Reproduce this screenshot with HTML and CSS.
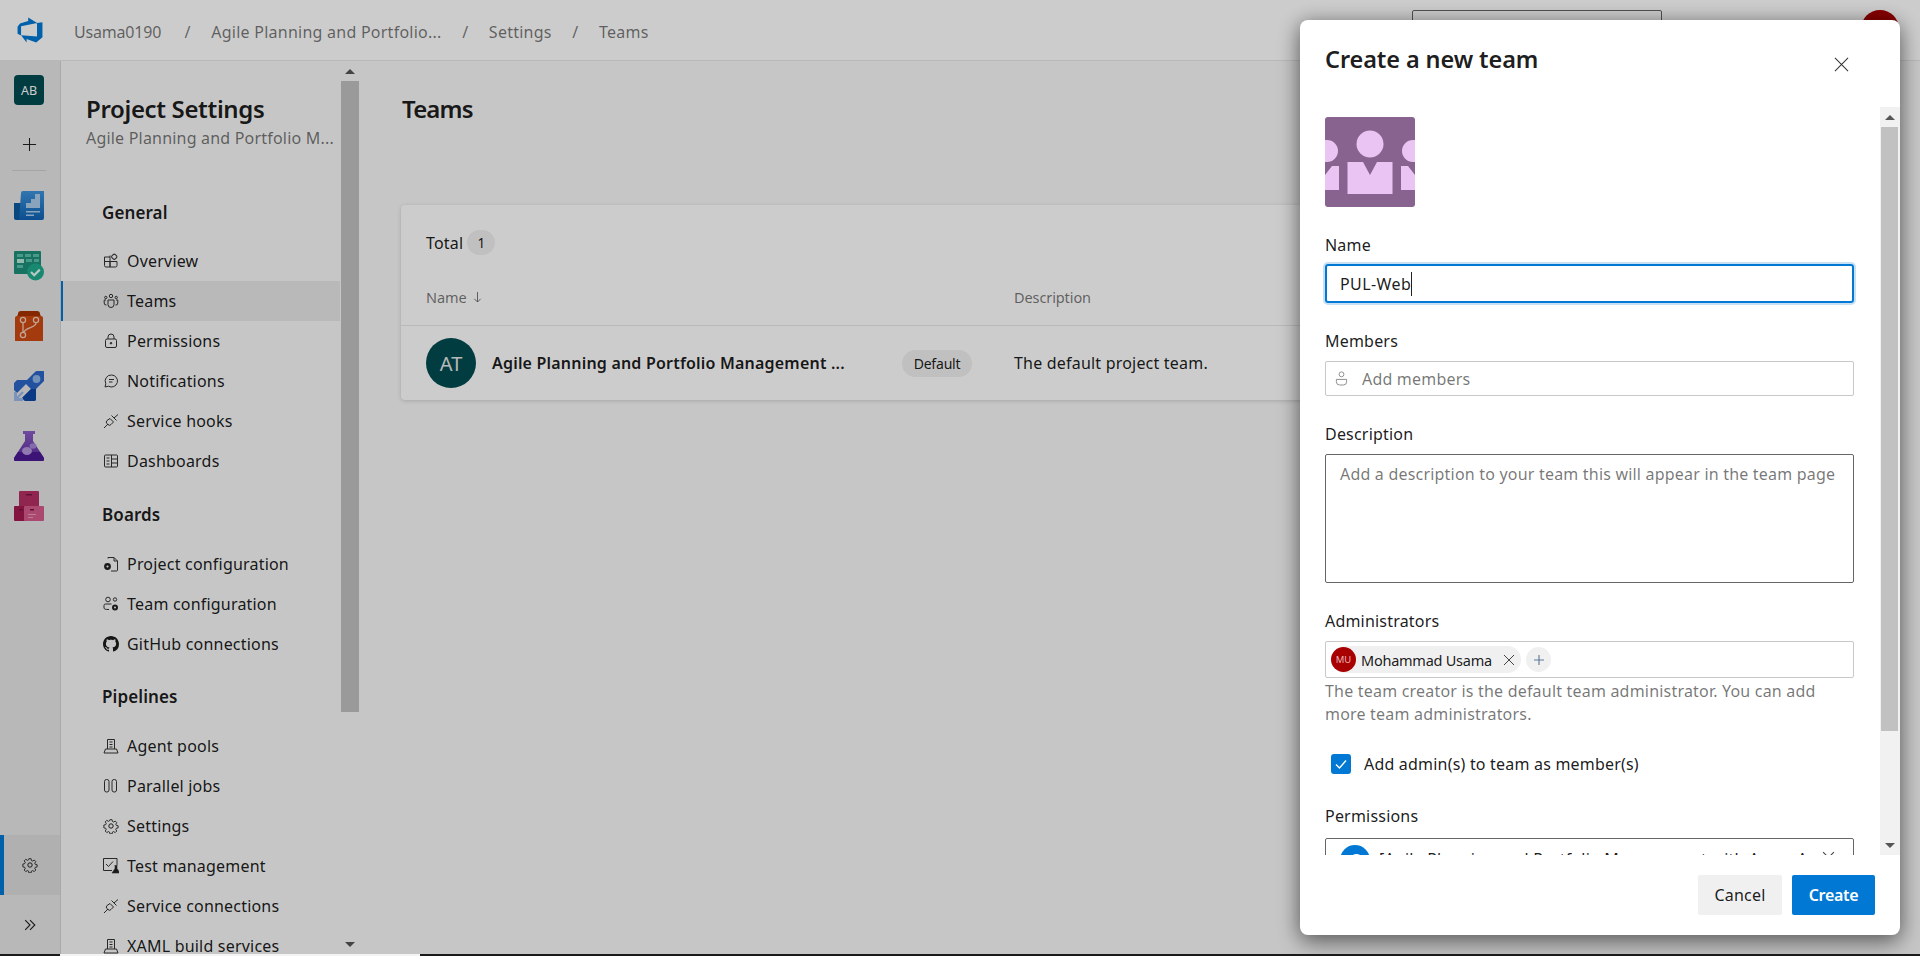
FILE: index.html
```html
<!DOCTYPE html>
<html lang="en">
<head>
<meta charset="utf-8">
<title>Teams - Project Settings</title>
<link rel="stylesheet" href="styles.css">
</head>
<body>
<div class="app">
  <header class="topbar">
    <svg class="logo" viewBox="0 0 18 18"><path fill="#0078d4" d="M17 4v9.74l-4 3.28-6.2-2.26V17L3.29 12.41l10.23.8V4.44L17 4zm-3.41.49L7.85 1v2.29L2.58 4.84 1 6.87v4.61l2.26 1V6.57z"/></svg>
    <nav class="crumbs">
      <span class="crumb first">Usama0190</span><span class="sep">/</span>
      <span class="crumb">Agile Planning and Portfolio...</span><span class="sep">/</span>
      <span class="crumb">Settings</span><span class="sep">/</span>
      <span class="crumb">Teams</span>
    </nav>
    <div class="search"></div>
    <div class="me"></div>
  </header>
  <div class="workspace">
    <aside class="rail">
      <div class="tile">AB</div>
      <svg class="plus" viewBox="0 0 16 16"><path d="M8 1v14M1 8h14" stroke="#222" stroke-width="1.1" fill="none"/></svg>
      <div class="rail-rule"></div>
      <svg class="svc" viewBox="0 0 30 30">
        <defs><linearGradient id="gb" x1="0" y1="0" x2="0" y2="1"><stop offset="0" stop-color="#3f94dc"/><stop offset="1" stop-color="#0f62b4"/></linearGradient></defs>
        <path d="M0 12h7v17H2a2 2 0 0 1-2-2z" fill="#0a5a9e"/><path d="M7 2a2 2 0 0 1 2-2h21v27a2 2 0 0 1-2 2H5z" fill="url(#gb)"/>
        <path d="M12 17v-5h5V8h4V3h5v14z" fill="#a9cdec"/><path d="M12 20h14v1.5H12zM12 23.5h8V25h-8z" fill="#a9cdec"/>
      </svg>
      <svg class="svc" viewBox="0 0 30 30">
        <rect x="0" y="0" width="27" height="23" rx="1" fill="#1f8f7b"/>
        <path d="M3 3h6v3H3zM11 3h6v3h-6zM19 3h6v3h-6z" fill="#5cc0ab"/><path d="M3 8h7v4H3z" fill="#b7eadd"/><path d="M12 8h6v3h-6zM20 8h5v3h-5zM3 14h6v3H3z" fill="#5cc0ab"/>
        <circle cx="21.5" cy="21" r="8.5" fill="#1eab8c"/><path d="M17 21l3.2 3.2 5.6-5.6" stroke="#e9fbf6" stroke-width="2.2" fill="none"/>
      </svg>
      <svg class="svc" viewBox="0 0 30 30">
        <path d="M4 3a3 3 0 0 1 3-3h16a3 3 0 0 1 3 3l2 5H2z" fill="#a73200"/><path d="M1 7a2 2 0 0 1 2-2h24a2 2 0 0 1 2 2v23H1z" fill="#cc4a12"/>
        <g fill="none" stroke="#f3cdb9" stroke-width="1.3"><circle cx="9" cy="9" r="2.6"/><circle cx="22" cy="9" r="2.6"/><circle cx="9" cy="24" r="2.6"/><path d="M9 12v9M22 12c0 5-10 4-12 9"/></g>
      </svg>
      <svg class="svc" viewBox="0 0 30 30">
        <path d="M2 9h10L20 1a3 3 0 0 1 2-1h6a2 2 0 0 1 2 2v6a3 3 0 0 1-1 2l-8 8v10a2 2 0 0 1-2 2h-9l-3-3 9-9-5-5-9 9-5-5-.5-.5a1.500 1.500 0 0 1 0-2z" transform="translate(1 0)" fill="#2b66c8"/>
        <path d="M22 18v10a2 2 0 0 1-2 2h-9l-3-3 9-9z" fill="#0f48a6"/>
        <circle cx="22.500" cy="8" r="3.900" fill="#8fb6e8"/>
        <path d="M0 21h3v6h6v3H0z" fill="#9db8e8"/><path d="M3 27l6-6" stroke="#9db8e8" stroke-width="2.400"/>
      </svg>
      <svg class="svc" viewBox="0 0 30 30">
        <defs><linearGradient id="gf" x1="0" y1="0" x2="0" y2="1"><stop offset="0" stop-color="#8a5fc7"/><stop offset="1" stop-color="#5c2a9d"/></linearGradient></defs>
        <path d="M9 0h12v3h-2v7l11 17a2 2 0 0 1-2 3H2a2 2 0 0 1-2-3l11-17V3H9z" fill="url(#gf)"/><path d="M4 21h22l4 6a2 2 0 0 1-2 3H2a2 2 0 0 1-2-3z" fill="#4a1a94"/>
        <ellipse cx="13" cy="20" rx="5" ry="4" fill="#b596dd"/><ellipse cx="19" cy="15" rx="3.4" ry="2.8" fill="#a688d6"/>
      </svg>
      <svg class="svc" viewBox="0 0 30 30">
        <rect x="5" y="0" width="20" height="16" rx="1" fill="#b42f63"/><rect x="0" y="15" width="15" height="15" rx="1" fill="#a3194f"/><rect x="10" y="15" width="20" height="15" rx="1" fill="#d55b8c"/>
        <path d="M12 3h6v1.5h-6zM5 18h4v1.5H5zM16 18h4v1.5h-4z" fill="#7b1340"/><path d="M14 23h8v1h-8zM14 26h5v1h-5z" fill="#eb9dbc"/>
      </svg>
      <div class="rail-fill"></div>
      <div class="rail-settings"><svg class="gear" viewBox="0 0 16 16"><use href="#i-gear"/></svg></div>
      <div class="rail-expand"><svg class="chev" viewBox="0 0 16 16"><path d="M2.500 2.500L8 8l-5.500 5.500M8 2.500L13.500 8 8 13.500" fill="none" stroke="#222" stroke-width="1.300"/></svg></div>
    </aside>

    <section class="settings">
      <div class="settings-list">
        <h1 class="settings-title">Project Settings</h1>
        <p class="settings-sub">Agile Planning and Portfolio M...</p>

        <h2 class="group first-group">General</h2>
        <a class="item"><svg class="ico" viewBox="0 0 16 16"><path d="M1.500 4h5.500v10H3a1.500 1.500 0 0 1-1.500-1.500zM1.500 8.500H14M7 8.500V14h5.500A1.500 1.500 0 0 0 14 12.500V8.500M7 4V2.500"/><rect x="9" y="1.500" width="4.500" height="4.500" rx="1.500" transform="rotate(45 11.250 3.750)"/></svg>Overview</a>
        <a class="item on"><svg class="ico" viewBox="0 0 16 16"><circle cx="8" cy="3" r="1.700"/><circle cx="2.800" cy="4.500" r="1.200"/><circle cx="13.200" cy="4.500" r="1.200"/><path d="M5 7h6v4.500a3 3 0 0 1-6 0zM3 7H1.200v3a2 2 0 0 0 2.300 2M13 7h1.800v3a2 2 0 0 1-2.300 2"/></svg>Teams</a>
        <a class="item"><svg class="ico" viewBox="0 0 16 16"><rect x="2.500" y="6" width="11" height="8.500" rx="1.500"/><path d="M5 6V4a3 3 0 0 1 6 0v2"/><circle cx="8" cy="10.200" r=".8" fill="#333"/></svg>Permissions</a>
        <a class="item"><svg class="ico" viewBox="0 0 16 16"><path d="M8.500 2a6 6 0 1 1-3 11.200L2 14l.8-3.300A6 6 0 0 1 8.500 2zM6 6.500h5M6 9h3.500"/></svg>Notifications</a>
        <a class="item"><svg class="ico" viewBox="0 0 16 16"><use href="#i-plug"/></svg>Service hooks</a>
        <a class="item"><svg class="ico" viewBox="0 0 16 16"><rect x="1.500" y="2" width="13" height="12" rx="1"/><path d="M8.500 2v12M3.500 5h3M3.500 8h3M3.500 11h3M8.500 6h6M8.500 10h6"/></svg>Dashboards</a>

        <h2 class="group">Boards</h2>
        <a class="item"><svg class="ico" viewBox="0 0 16 16"><path d="M5 2.500V1.500h6l3.500 3.500v9a1 1 0 0 1-1 1H8M11 1.500V5h3.500"/><circle cx="4.500" cy="10.500" r="3.400" fill="#222" stroke="none"/><circle cx="4.500" cy="10.500" r="1.100" fill="#f8f8f8" stroke="none"/></svg>Project configuration</a>
        <a class="item"><svg class="ico" viewBox="0 0 16 16"><circle cx="5" cy="3.500" r="2.300"/><circle cx="12" cy="3.500" r="1.700"/><path d="M1 12V9.500A1.500 1.500 0 0 1 2.500 8h6M1 12c0 1 1.500 1.500 4 1.500h1"/><circle cx="12" cy="11.500" r="3" fill="#222" stroke="none"/><circle cx="12" cy="11.500" r="1" fill="#f8f8f8" stroke="none"/></svg>Team configuration</a>
        <a class="item"><svg class="ico gh" viewBox="0 0 16 16"><path fill="#1b1b1b" stroke="none" d="M8 0C3.580 0 0 3.580 0 8c0 3.540 2.290 6.530 5.470 7.590.400.070.550-.170.550-.380 0-.190-.010-.820-.010-1.490-2.010.370-2.530-.490-2.690-.940-.090-.230-.480-.940-.820-1.130-.280-.150-.680-.520-.010-.530.630-.010 1.080.580 1.230.820.720 1.210 1.870.870 2.330.660.070-.520.280-.870.510-1.070-1.780-.200-3.640-.890-3.640-3.950 0-.870.310-1.590.820-2.150-.080-.200-.360-1.020.080-2.120 0 0 .670-.210 2.200.820.640-.180 1.320-.270 2-.270s1.360.090 2 .270c1.530-1.040 2.200-.820 2.200-.820.440 1.100.160 1.920.080 2.120.510.560.820 1.270.820 2.150 0 3.070-1.870 3.750-3.650 3.950.290.250.540.730.540 1.480 0 1.070-.010 1.930-.010 2.200 0 .210.150.460.550.380A8.010 8.010 0 0 0 16 8c0-4.420-3.580-8-8-8z"/></svg>GitHub connections</a>

        <h2 class="group pipe">Pipelines</h2>
        <a class="item"><svg class="ico" viewBox="0 0 16 16"><use href="#i-agent"/></svg>Agent pools</a>
        <a class="item"><svg class="ico" viewBox="0 0 16 16"><rect x="1.500" y="1.500" width="4.500" height="12.500" rx="2"/><rect x="9" y="1.500" width="4.500" height="12.500" rx="2"/></svg>Parallel jobs</a>
        <a class="item"><svg class="ico" viewBox="0 0 16 16"><use href="#i-gear"/></svg>Settings</a>
        <a class="item"><svg class="ico" viewBox="0 0 16 16"><path d="M9 12.500H.500V.500H14V7M3 6l2.500 2.500L10 3.500"/><path d="M11.500 7.500h3M12 7.500v3l-3 4.500h8l-3-4.500v-3" fill="#222" stroke-width=".6"/></svg>Test management</a>
        <a class="item"><svg class="ico" viewBox="0 0 16 16"><use href="#i-plug"/></svg>Service connections</a>
        <a class="item"><svg class="ico" viewBox="0 0 16 16"><use href="#i-agent"/></svg>XAML build services</a>
      </div>
      <div class="sb sb-page">
        <span class="arrow-up"></span>
        <span class="sb-thumb"></span>
        <span class="sb-rest"></span>
        <span class="arrow-down"></span>
      </div>
    </section>

    <main class="main">
      <h1 class="page-title">Teams</h1>
      <section class="card">
        <div class="total">Total<span class="count">1</span></div>
        <div class="thead">
          <div class="th">Name <svg class="sort" viewBox="0 0 10 14"><path d="M5 1v11M1.500 8.500L5 12l3.500-3.500" fill="none" stroke="#666" stroke-width="1"/></svg></div>
          <div class="th">Description</div>
        </div>
        <div class="trow">
          <div class="namecell">
            <span class="team-av">AT</span>
            <span class="team-name">Agile Planning and Portfolio Management ...</span>
            <span class="pill">Default</span>
          </div>
          <div class="desc">The default project team.</div>
        </div>
      </section>
    </main>
  </div>
  <div class="scrim"></div>

  <div class="modal">
    <div class="modal-head">
      <h2 class="modal-title">Create a new team</h2>
      <svg class="close" viewBox="0 0 16 16"><path d="M1 1l14 14M15 1L1 15" stroke="#333" stroke-width="1.100" fill="none"/></svg>
    </div>
    <div class="modal-mid">
      <div class="form">
        <svg class="team-pic" viewBox="0 0 90 90">
          <rect width="90" height="90" rx="3" fill="#886390"/>
          <g fill="#eac4f2">
            <ellipse cx="45" cy="27" rx="13.500" ry="13.500"/>
            <path d="M22.500 45H38l7 13 7-13h15.500v32h-45z"/>
            <path d="M0 23h2a11 11 0 0 1 0 22H0zM90 23h-2a11 11 0 0 0 0 22h2z"/>
            <path d="M0 58l7-9h7v24H0zM90 58l-7-9h-7v24h14z"/>
          </g>
        </svg>
        <label class="lbl l-name">Name</label>
        <div class="field f-name"><span>PUL-Web</span><i class="caret"></i></div>
        <label class="lbl l-mem">Members</label>
        <div class="field f-mem">
          <svg class="person" viewBox="0 0 14 16"><circle cx="7" cy="3.500" r="2.600"/><path d="M1.500 9h11v2.500a3.500 3.500 0 0 1-3.500 3.500H5a3.500 3.500 0 0 1-3.500-3.500z"/></svg>
          <span class="ph">Add members</span>
        </div>
        <label class="lbl l-desc">Description</label>
        <div class="field f-desc"><span class="ph">Add a description to your team this will appear in the team page</span></div>
        <label class="lbl l-adm">Administrators</label>
        <div class="field f-adm">
          <span class="chip"><span class="chip-av">MU</span><span class="chip-name">Mohammad Usama</span><svg class="chip-x" viewBox="0 0 12 12"><path d="M1 1l10 10M11 1L1 11" stroke="#444" stroke-width="1" fill="none"/></svg></span>
          <span class="chip-add"><svg viewBox="0 0 12 12"><path d="M6 1v10M1 6h10" stroke="#5a7a96" stroke-width="1.100" fill="none"/></svg></span>
        </div>
        <p class="help">The team creator is the default team administrator. You can add more team administrators.</p>
        <div class="check-row">
          <span class="check"><svg viewBox="0 0 20 20"><path d="M5 10.500l3.500 3.500L15 6.500" stroke="#fff" stroke-width="1.400" fill="none"/></svg></span>
          <span>Add admin(s) to team as member(s)</span>
        </div>
        <label class="lbl l-perm">Permissions</label>
        <div class="field f-perm">
          <span class="perm-av">C</span>
          <span class="perm-text">[Agile Planning and Portfolio Management with Azure A</span>
          <svg class="perm-x" viewBox="0 0 12 12"><path d="M1 1l10 10M11 1L1 11" stroke="#444" stroke-width="1" fill="none"/></svg>
        </div>
      </div>
      <div class="sb sb-modal">
        <span class="arrow-up"></span>
        <span class="sb-thumb"></span>
        <span class="sb-rest"></span>
        <span class="arrow-down"></span>
      </div>
    </div>
    <div class="modal-foot">
      <button class="btn">Cancel</button>
      <button class="btn primary">Create</button>
    </div>
  </div>
</div>
<div class="strip"><span class="strip-a"></span><span class="strip-b"></span><span class="strip-c"></span></div>

<svg class="defs" width="0" height="0">
  <defs>
    <g id="i-gear" fill="none" stroke="#222" stroke-width="1">
      <circle cx="8" cy="8" r="2.200"/>
      <path d="M6.800 1h2.400l.4 2 1.300.6 1.800-1.100 1.700 1.700-1.100 1.800.6 1.300 2 .4v2.400l-2 .4-.6 1.300 1.100 1.800-1.700 1.700-1.800-1.100-1.300.6-.4 2H6.800l-.4-2-1.300-.6-1.800 1.100-1.700-1.700 1.100-1.800-.6-1.300-2-.4V6.900l2-.4.6-1.300-1.100-1.800 1.700-1.700 1.800 1.100 1.300-.6z" transform="translate(.8 .8) scale(.9)"/>
    </g>
    <g id="i-plug" fill="none" stroke="#333" stroke-width="1">
      <path d="M1 15l4-4M11 5l4-3.500M7 5.500l3.500 3.500-2.500 2.500a2 2 0 0 1-3 0l-1-1a2 2 0 0 1 0-3zM9.500 3.500l3 3M8.500 2.500l5 5"/>
    </g>
    <g id="i-agent" fill="none" stroke="#333" stroke-width="1">
      <path d="M4.500 11V1.500h7V11M1 15l1.500-4h11L15 15zM6.500 4h3M6.500 6.500h3M6.500 9h3"/>
    </g>
  </defs>
</svg>
</body>
</html>
```

FILE: styles.css
```css
* { box-sizing: border-box; }
html, body { margin: 0; height: 956px; overflow: hidden; }
body {
  font-family: "Noto Sans", "Open Sans", sans-serif;
  font-size: 16px;
  letter-spacing: 0.2px;
  color: rgba(0, 0, 0, 0.9);
  background: #f8f8f8;
  display: flex;
  flex-direction: column;
}
h1, h2, p { margin: 0; font-weight: 400; }
.defs { position: absolute; }

.app { position: relative; height: 954px; display: flex; flex-direction: column; overflow: hidden; }
.strip { height: 2px; display: flex; background: #1a1a1a; position: relative; }
.strip-a { width: 60px; }
.strip-b { width: 360px; background: #f4f4f4; }
.strip-c { flex: 1; }

/* top bar */
.topbar {
  height: 61px; flex: none; display: flex; align-items: center;
  background: #ffffff; border-bottom: 1px solid #e6e6e6; padding-left: 16px;
}
.logo { width: 28px; height: 28px; flex: none; }
.crumbs { display: flex; align-items: center; color: rgba(0, 0, 0, 0.55); margin: 3px 0 0 30px; flex: none; letter-spacing: 0.25px; }
.crumb { white-space: nowrap; }
.crumb.first { width: 85px; letter-spacing: -0.2px; margin-right: 5px; }
.sep { margin: 0 20.500px; }
.search {
  width: 250px; height: 38px; border: 1px solid #666; border-radius: 2px; background: #fff;
  margin-left: auto; align-self: flex-start; margin-top: 10px;
}
.me { width: 38px; height: 38px; border-radius: 50%; background: #a80000; margin: 10px 21px 0 199px; flex: none; align-self: flex-start; }

.workspace { flex: 1; display: flex; min-height: 0; }

/* service rail */
.rail {
  width: 61px; flex: none; background: #e6e6e6; border-right: 1px solid #d4d4d4;
  display: flex; flex-direction: column; align-items: center; padding: 14px 2px 0 0;
}
.tile {
  width: 30px; height: 30px; border-radius: 4px; background: #004b50; color: #fff;
  font-size: 12.500px; display: flex; align-items: center; justify-content: center; letter-spacing: 0;
}
.plus { width: 15px; height: 15px; margin-top: 32px; }
.rail-rule { width: 34px; height: 1px; background: #cfcfcf; margin-top: 18px; }
.svc { width: 30px; height: 30px; flex: none; margin-top: 30px; }
.rail-rule + .svc { margin-top: 20px; }
.rail-fill { flex: 1; }
.rail-settings {
  width: 60px; height: 60px; background: #dcdcdc; border-left: 4px solid #0078d4; align-self: flex-start;
  display: flex; align-items: center; justify-content: center; padding-right: 4px;
}
.gear { width: 16px; height: 16px; }
.rail-expand { width: 60px; height: 59px; display: flex; align-items: center; justify-content: center; align-self: flex-start; }
.chev { width: 14px; height: 14px; }

/* settings column */
.settings { width: 299px; flex: none; display: flex; background: #f8f8f8; }
.settings-list { width: 279px; flex: none; overflow: hidden; }
.settings-title { font-size: 24px; font-weight: 600; line-height: 32px; margin: 32px 0 0 25px; letter-spacing: -0.35px; white-space: nowrap; }
.settings-sub { line-height: 24px; margin: 1px 0 0 25px; color: rgba(0, 0, 0, 0.55); white-space: nowrap; }
.group { font-size: 17px; font-weight: 600; line-height: 24px; margin: 22px 0 17px 41px; letter-spacing: 0.1px; }
.first-group { margin: 51px 0 16px 41px; }
.pipe { margin-top: 21px; margin-bottom: 17px; }
.item { height: 40px; display: flex; align-items: center; padding-left: 42px; white-space: nowrap; }
.item.on { background: #e8e8e8; box-shadow: inset 2px 0 0 #0078d4; }
.ico { width: 16px; height: 16px; flex: none; margin-right: 8px; fill: none; stroke: #333; stroke-width: 1; }

/* scrollbars */
.sb { display: flex; flex-direction: column; align-items: stretch; flex: none; background: #f1f1f1; }
.sb-page { width: 20px; background: #f8f8f8; padding: 0 1px; }
.sb-modal { width: 20px; padding: 0 2px 0 1px; }
.sb-thumb { background: #c1c1c1; flex: none; }
.sb-rest { flex: 1; }
.arrow-up, .arrow-down { height: 20px; flex: none; display: flex; align-items: center; justify-content: center; }
.arrow-up::before { content: ""; border: 5px solid transparent; border-top: 0; border-bottom: 5px solid #555; }
.arrow-down::before { content: ""; border: 5px solid transparent; border-bottom: 0; border-top: 5px solid #555; }
.sb-page .sb-thumb { height: 631px; }
.sb-modal .sb-thumb { height: 604px; }

/* main */
.main { flex: 1; min-width: 0; padding: 32px 25px 0 41px; background: #f8f8f8; }
.page-title { font-size: 24px; font-weight: 600; line-height: 32px; margin-left: 1px; letter-spacing: -0.85px; }
.card { margin-top: 80px; height: 195px; padding-top: 25px; background: #fff; border-radius: 4px; box-shadow: 0 1px 4px rgba(0, 0, 0, 0.16); }
.total { display: flex; align-items: center; height: 25px; margin-left: 25px; }
.count {
  min-width: 28px; height: 25px; border-radius: 13px; background: #f0f0f0; margin-left: 4px;
  display: flex; align-items: center; justify-content: center; font-size: 13.500px;
}
.thead {
  display: grid; grid-template-columns: 613px 1fr; height: 71px; padding-top: 14px;
  align-items: center; border-bottom: 1px solid #e8e8e8; color: rgba(0, 0, 0, 0.55); font-size: 14.500px; letter-spacing: -0.1px;
}
.th { padding-left: 25px; display: flex; align-items: center; gap: 6px; }
.th + .th { padding-left: 0; }
.sort { width: 9px; height: 13px; }
.trow { display: grid; grid-template-columns: 613px 1fr; height: 74px; align-items: center; }
.namecell { display: flex; align-items: center; padding-left: 25px; }
.team-av {
  width: 50px; height: 50px; border-radius: 50%; background: #004b50; color: #e6e6e6; flex: none;
  display: flex; align-items: center; justify-content: center; font-size: 20px; letter-spacing: 0;
}
.team-name { width: 354px; margin-left: 16px; font-weight: 600; white-space: nowrap; flex: none; }
.pill {
  width: 70px; height: 27px; border-radius: 14px; background: #f0f0f0; margin-left: 56px; flex: none;
  display: flex; align-items: center; justify-content: center; font-size: 14px; letter-spacing: -0.2px;
}

.scrim { position: absolute; inset: 0; background: rgba(0, 0, 0, 0.2); }

/* modal */
.modal {
  position: absolute; left: 1300px; top: 20px; width: 600px; height: 915px;
  background: #fff; border-radius: 8px; display: flex; flex-direction: column;
  box-shadow: 0 8px 22px rgba(0, 0, 0, 0.42), 0 0 18px rgba(0, 0, 0, 0.22);
}
.modal-head { height: 87px; flex: none; display: flex; justify-content: space-between; padding: 0 51px 0 25px; }
.modal-title { font-size: 23.500px; font-weight: 600; line-height: 32px; margin-top: 23px; letter-spacing: -0.1px; }
.close { width: 15px; height: 15px; margin-top: 37px; }
.modal-mid { flex: 1; display: flex; min-height: 0; }
.form { width: 580px; flex: none; padding: 10px 26px 0 25px; overflow: hidden; }
.team-pic { width: 90px; height: 90px; display: block; }
.lbl { display: block; line-height: 24px; }
.l-name { margin-top: 26px; }
.l-mem { margin-top: 26px; }
.l-desc { margin-top: 26px; }
.l-adm { margin-top: 26px; }
.l-perm { margin-top: 30px; }
.field { border: 1px solid #c8c8c8; border-radius: 2px; display: flex; align-items: center; }
.ph { color: rgba(0, 0, 0, 0.55); white-space: nowrap; }
.f-name {
  height: 39px; margin-top: 7px; border: 2px solid #0078d4; border-radius: 3px; padding-left: 13px;
  box-shadow: 0 0 0 2px #c7e0f4; letter-spacing: 0.4px;
}
.caret { width: 1px; height: 24px; background: #222; display: block; }
.f-mem { height: 35px; margin-top: 8px; padding-left: 9px; }
.person { width: 13px; height: 15px; fill: none; stroke: #888; stroke-width: 1; flex: none; }
.f-mem .ph { margin-left: 14px; }
.f-desc { height: 129px; margin-top: 8px; border-color: #666; align-items: flex-start; padding: 8px 0 0 14px; }
.f-adm { height: 37px; margin-top: 8px; padding-left: 5px; gap: 5px; }
.chip { width: 190px; height: 27px; border-radius: 14px; background: #f0f0f0; display: flex; align-items: center; flex: none; font-size: 14.500px; letter-spacing: -0.25px; }
.chip-av {
  width: 25px; height: 25px; border-radius: 50%; background: #a80000; color: #e8b4b4; font-size: 9.500px; letter-spacing: 0;
  display: flex; align-items: center; justify-content: center; flex: none;
}
.chip-name { margin-left: 5px; white-space: nowrap; width: 136px; flex: none; }
.chip-x { width: 12px; height: 12px; margin-left: 6px; }
.chip-add { width: 25px; height: 25px; border-radius: 50%; background: #f0f0f0; display: flex; align-items: center; justify-content: center; }
.chip-add svg { width: 12px; height: 12px; }
.help { margin-top: 2px; line-height: 23px; color: rgba(0, 0, 0, 0.55); }
.check-row { display: flex; align-items: center; margin: 28px 0 0 6px; height: 20px; gap: 13px; }
.check { width: 20px; height: 20px; border-radius: 3px; background: #0078d4; flex: none; }
.check svg { display: block; width: 20px; height: 20px; }
.f-perm { height: 60px; margin-top: 10px; border-color: #666; padding: 6px 10px 0 14px; align-items: flex-start; }
.perm-av { width: 30px; height: 30px; border-radius: 50%; background: #0078d4; color: #fff; flex: none; display: flex; align-items: center; justify-content: center; }
.perm-text { margin: 3px 0 0 9px; white-space: nowrap; width: 436px; overflow: hidden; flex: none; }
.perm-x { width: 13px; height: 13px; margin-left: 7px; margin-top: 6px; }
.modal-foot { height: 80px; flex: none; display: flex; justify-content: flex-end; gap: 10px; padding: 20px 25px 0 0; }
.btn {
  width: 84px; height: 40px; border: 0; border-radius: 2px; background: #f0f0f0; font: inherit; letter-spacing: inherit;
  color: rgba(0, 0, 0, 0.9); padding: 0;
}
.btn.primary { width: 83px; background: #0078d4; color: #fff; font-weight: 600; letter-spacing: -0.3px; }
```
